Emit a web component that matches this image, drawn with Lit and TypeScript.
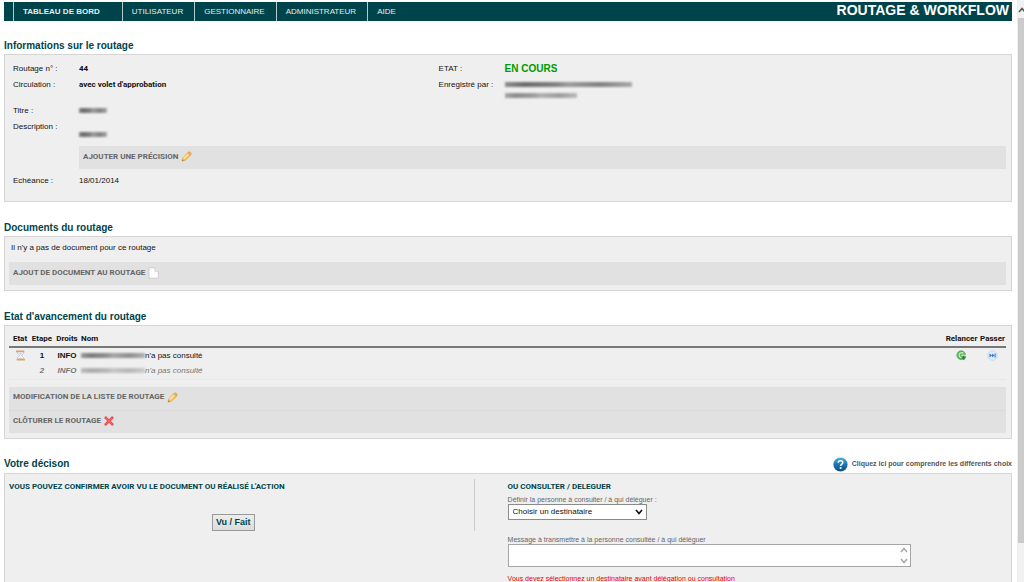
import { LitElement, html, css, svg } from "lit";
import { customElement } from "lit/decorators.js";

const pencil = html`<svg class="icon" width="11" height="11" viewBox="0 0 16 16" aria-hidden="true">
  <path d="M1.5 14.5 L2.6 10.2 L10 2.1 Q12.2 .7 13.9 2.2 Q15.4 3.8 14 6 L6 13.8 Z" fill="#f6c552" stroke="#dca444" stroke-width="1"/>
  <path d="M4 11 L11 4" stroke="#fdeaac" stroke-width="2.2"/>
  <path d="M10.6 2.3 Q12.2 .9 13.8 2.3 Q15.2 3.8 13.8 5.4 L12.9 6.2 L9.8 3.1 Z" fill="#f0ae72" stroke="#d3904c" stroke-width=".6"/>
  <path d="M1.2 14.8 L2 12 L4.2 14.2 Z" fill="#a08252"/>
</svg>`;

const sheet = html`<svg class="icon" width="11" height="12" viewBox="0 0 16 17" aria-hidden="true">
  <path d="M1.5 1 H10 L15 6 V16 H1.5 Z" fill="#fff" stroke="#c0c0c0"/>
  <path d="M10 1 V6 H15" fill="#f0f0f0" stroke="#c3c3c3"/>
</svg>`;

const cross = html`<svg class="icon" width="10" height="10" viewBox="0 0 16 16" aria-hidden="true">
  <path d="M3 3 L13 13 M13 3 L3 13" stroke="#dc4048" stroke-width="4" stroke-linecap="square"/>
  <path d="M3 3 L13 13 M13 3 L3 13" stroke="#f4686c" stroke-width="2.2" stroke-linecap="square"/>
</svg>`;

const hourglass = html`<svg class="glyph" width="11" height="11" viewBox="0 0 16 16" role="img" aria-label="En attente">
  <path d="M3 2.5 H13 L12 5.5 L9 8 L12 10.5 L13 13.5 H3 L4 10.5 L7 8 L4 5.5 Z" fill="#f4f8fe" stroke="#a3bbe4"/>
  <path d="M5.4 4.8 H10.6 L8 7 Z M8 11 L10.6 13 H5.4 Z" fill="#ecc48e"/>
  <path d="M1.5 2 H13.5 M2.5 14 H14.5" stroke="#d6a473" stroke-width="2.4"/>
</svg>`;

const relaunch = html`<svg class="glyph" width="11" height="11" viewBox="0 0 16 16" aria-hidden="true">
  <circle cx="7.6" cy="7.6" r="6.4" fill="#5fb561" stroke="#58a55a"/>
  <path d="M10.8 5 A3.6 3.6 0 1 0 8 11" fill="none" stroke="#d9f2d8" stroke-width="1.5"/>
  <path d="M7.8 7.6 H15" stroke="#eefaee" stroke-width="1.4"/>
  <path d="M12 8.4 V10.4 H14.8 L11.4 15 L8 10.6 H10 V8.4 Z" fill="#36803b"/>
</svg>`;

const skip = html`<svg class="glyph" width="11" height="11" viewBox="0 0 16 16" aria-hidden="true">
  <circle cx="8" cy="8" r="7" fill="#deedfc" stroke="#b4d0ef"/>
  <path d="M3.6 5 L7.4 8 L3.6 11 Z M7.4 5 L11 8 L7.4 11 Z" fill="#3c79c4"/>
  <path d="M11.8 5 V11" stroke="#3c79c4" stroke-width="1.6"/>
</svg>`;

const help = html`<svg class="help-icon" width="15" height="15" viewBox="0 0 30 30" aria-hidden="true">
  <defs><linearGradient id="hg" x1="0" y1="0" x2="0" y2="1">
    <stop offset="0" stop-color="#46b4e0"/><stop offset=".5" stop-color="#1c76b0"/><stop offset="1" stop-color="#124a7e"/>
  </linearGradient></defs>
  <circle cx="15" cy="15" r="14.2" fill="url(#hg)"/>
  <path d="M10.4 11.6 Q10.6 7.4 15 7.4 Q19.6 7.4 19.6 11 Q19.6 13.2 17.2 14.6 Q15.2 15.8 15.2 18" fill="none" stroke="#fff" stroke-width="3"/>
  <circle cx="15.2" cy="22" r="2.1" fill="#fff"/>
</svg>`;

const chevron = (cls: string, d: string) =>
  html`<svg class=${cls} width="8" height="6" viewBox="0 0 8 6" aria-hidden="true">${svg`<path d=${d} fill="none" stroke="currentColor" stroke-width="1.6"/>`}</svg>`;
const UP = "M1 5 L4 1.5 L7 5";
const DOWN = "M1 1 L4 4.5 L7 1";

@customElement("app-root")
export class AppRoot extends LitElement {
  static styles = css`
    :host {
      display: flex;
      height: 100vh;
      overflow: hidden;
      background: #fff;
      color: #111;
      font: 8px/12px "Liberation Sans", Arial, sans-serif;
    }
    * { box-sizing: border-box; }
    a { color: inherit; text-decoration: none; }
    button, select, textarea { font: inherit; color: inherit; margin: 0; border-radius: 0; }
    main { flex: 1; min-width: 0; padding: 2px 5px 0 4px; }
    .bar {
      display: flex;
      height: 19px;
      padding-left: 9px;
      background: #00444b;
      color: #e4eeee;
      line-height: 19px;
    }
    .bar a { padding: 0 11px 0 9px; border-left: 1px solid #b4cccd; }
    .bar .home { padding-right: 22px; font-weight: bold; }
    .brand { margin-left: auto; padding-right: 3px; color: #fff; font-size: 14px; line-height: 17px; font-weight: bold; }
    h2 { margin: 0; color: #00444b; font-size: 10px; line-height: 14px; }
    .head { display: flex; align-items: center; justify-content: space-between; height: 15px; }
    section { margin-top: 17px; }
    section + section { margin-top: 18px; }
    .panel { margin-top: 1px; border: 1px solid #d5d5d5; background: #efefef; }
    dl, dt, dd { margin: 0; }
    .info { padding: 8px 5px 10px 8px; }
    .cols { display: flex; }
    .cols dl:first-child { flex: 3; }
    .cols dl:last-child { flex: 4; }
    .row { display: grid; grid-template-columns: 66px 1fr; min-height: 16px; }
    .texts { margin-top: 7px; }
    .strong, .actions, .steps th, h3 { font-family: Roboto, "Liberation Sans", sans-serif; font-weight: bold; }
    .state { color: #009a00; font-size: 10px; font-weight: bold; }
    .smear {
      display: block;
      height: 5px;
      margin-top: 3px;
      background: linear-gradient(95deg, #777, #4a4a4a 15%, #666 40%, #888 50%, #666 75%, #999);
      filter: blur(1px);
      opacity: .8;
    }
    .smear.name { display: inline-block; width: 64px; height: 5px; margin: 0; vertical-align: 0; opacity: .7; }
    .smear.short { width: 28px; }
    .smear.long { width: 127px; }
    .smear.mid { width: 72px; margin-top: 6px; opacity: .6; }
    .smear.low { margin-top: 11px; }
    .desc { min-height: 25px; }
    .actions { display: flex; flex-direction: column; background: #e1e1e1; }
    .actions a {
      display: flex;
      align-items: center;
      gap: 3px;
      height: 23px;
      padding: 0 4px 2px;
      color: #666;
    }
    .actions a + a { border-top: 1px solid #dadada; }
    .inner { margin-left: 66px; }
    .due { margin-top: 6px; }
    .docs { padding: 5px 5px 5px 4px; }
    .docs p { margin: 0 0 8px 2px; }
    .progress { padding: 5px 5px 5px 4px; }
    .steps { width: 100%; border-collapse: collapse; border-bottom: 1px solid #e6e6e6; }
    .steps th { padding: 2px 0 1px; text-align: center; white-space: nowrap; border-bottom: 2px solid #777; }
    .steps td { height: 16px; padding: 0; text-align: center; font-weight: bold; }
    .steps th.who { text-align: left; }
    .steps td.who { text-align: left; font-weight: normal; }
    .steps .later td { color: #777; font-style: italic; }
    .steps .later .smear { opacity: .4; }
    .c1, .c2 { width: 22px; }
    .c3 { width: 28px; }
    .c5 { width: 35px; }
    .c6 { width: 27px; }
    .glyph { display: block; margin: auto; }
    .steps button { display: block; margin: auto; padding: 0; border: 0; background: none; }
    .steps + .actions { margin-top: 7px; }
    .help { display: flex; align-items: center; gap: 4px; color: #555; font-size: 7px; font-weight: bold; }
    .decision { display: flex; padding: 5px 5px 12px 4px; color: #00444b; }
    h3 { margin: 0; font-size: 8px; line-height: 16px; }
    .confirm {
      flex: none;
      width: 46.7%;
      height: 52px;
      border-right: 1px solid #ccc;
      text-align: center;
    }
    .confirm h3 { text-align: left; }
    .confirm button {
      height: 17px;
      margin: 19px 16px 0 0;
      padding: 0 3px;
      border: 1px solid #999;
      background: linear-gradient(#ededed, #dcdcdc);
      font-size: 9px;
      line-height: 15px;
      font-weight: bold;
    }
    .delegate { flex: 1; padding-left: 33px; }
    .delegate label { display: block; color: #666; font-size: 7px; line-height: 9px; }
    .pick { display: grid; width: 139px; margin-bottom: 15px; color: #111; }
    .pick select {
      grid-area: 1 / 1;
      appearance: none;
      height: 16px;
      padding: 0 4px;
      border: 1px solid #8a8a8a;
      background: #fff;
    }
    .pick-arrow { grid-area: 1 / 1; align-self: center; justify-self: end; margin-right: 4px; pointer-events: none; }
    .message { display: flex; width: 81%; height: 23px; border: 1px solid #a5a5a5; background: #fff; }
    .message textarea { flex: 1; min-width: 0; padding: 2px; border: 0; resize: none; overflow: hidden; background: none; outline: 0; }
    .spin { display: flex; flex-direction: column; justify-content: space-between; width: 11px; padding: 2px 1px; color: #aaa; }
    .warn { margin: 7px 0 0; color: #e60000; font-size: 7px; line-height: 10px; }
    .scroll { display: flex; flex-direction: column; width: 7px; border-left: 1px solid #eee; background: #f1f1f1; }
    .cap { display: flex; height: 18px; padding-top: 7px; color: #555; overflow: hidden; }
    .cap svg { flex: none; }
    .thumb { height: 525px; background: #cbcbcb; }
  `;

  render() {
    return html`
      <main>
        <nav class="bar">
          <a class="home" href="#">TABLEAU DE BORD</a>
          <a href="#">UTILISATEUR</a>
          <a href="#">GESTIONNAIRE</a>
          <a href="#">ADMINISTRATEUR</a>
          <a href="#">AIDE</a>
          <span class="brand">ROUTAGE &amp; WORKFLOW</span>
        </nav>

        <section>
          <div class="head"><h2>Informations sur le routage</h2></div>
          <div class="panel info">
            <div class="cols">
              <dl>
                <div class="row"><dt>Routage n° :</dt><dd class="strong">44</dd></div>
                <div class="row"><dt>Circulation :</dt><dd class="strong">avec volet d'approbation</dd></div>
              </dl>
              <dl>
                <div class="row"><dt>ETAT :</dt><dd class="state">EN COURS</dd></div>
                <div class="row"><dt>Enregistré par :</dt><dd><span class="smear long"></span><span class="smear mid"></span></dd></div>
              </dl>
            </div>
            <dl class="texts">
              <div class="row"><dt>Titre :</dt><dd><span class="smear short"></span></dd></div>
              <div class="row desc"><dt>Description :</dt><dd><span class="smear short low"></span></dd></div>
            </dl>
            <div class="actions inner"><a href="#">AJOUTER UNE PRÉCISION ${pencil}</a></div>
            <dl class="due">
              <div class="row"><dt>Echéance :</dt><dd>18/01/2014</dd></div>
            </dl>
          </div>
        </section>

        <section>
          <div class="head"><h2>Documents du routage</h2></div>
          <div class="panel docs">
            <p>Il n'y a pas de document pour ce routage</p>
            <div class="actions"><a href="#">AJOUT DE DOCUMENT AU ROUTAGE ${sheet}</a></div>
          </div>
        </section>

        <section>
          <div class="head"><h2>Etat d'avancement du routage</h2></div>
          <div class="panel progress">
            <table class="steps">
              <thead>
                <tr>
                  <th class="c1">Etat</th><th class="c2">Etape</th><th class="c3">Droits</th><th class="who">Nom</th>
                  <th class="c5">Relancer</th><th class="c6">Passer</th>
                </tr>
              </thead>
              <tbody>
                <tr>
                  <td>${hourglass}</td><td>1</td><td>INFO</td>
                  <td class="who"><span class="smear name"></span>n'a pas consulté</td>
                  <td><button aria-label="Relancer">${relaunch}</button></td>
                  <td><button aria-label="Passer">${skip}</button></td>
                </tr>
                <tr class="later">
                  <td></td><td>2</td><td>INFO</td>
                  <td class="who"><span class="smear name"></span>n'a pas consulté</td>
                  <td></td><td></td>
                </tr>
              </tbody>
            </table>
            <div class="actions">
              <a href="#">MODIFICATION DE LA LISTE DE ROUTAGE ${pencil}</a>
              <a href="#">CLÔTURER LE ROUTAGE ${cross}</a>
            </div>
          </div>
        </section>

        <section>
          <div class="head">
            <h2>Votre décison</h2>
            <a class="help" href="#">${help} Cliquez ici pour comprendre les différents choix</a>
          </div>
          <div class="panel decision">
            <div class="confirm">
              <h3>VOUS POUVEZ CONFIRMER AVOIR VU LE DOCUMENT OU RÉALISÉ L'ACTION</h3>
              <button>Vu / Fait</button>
            </div>
            <div class="delegate">
              <h3>OU CONSULTER / DELEGUER</h3>
              <label for="who">Définir la personne à consulter / à qui déléguer :</label>
              <div class="pick">
                <select id="who"><option>Choisir un destinataire</option></select>
                ${chevron("pick-arrow", DOWN)}
              </div>
              <label for="msg">Message à transmettre à la personne consultée / à qui déléguer</label>
              <div class="message">
                <textarea id="msg"></textarea>
                <span class="spin">${chevron("", UP)}${chevron("", DOWN)}</span>
              </div>
              <p class="warn">Vous devez sélectionnez un destinataire avant délégation ou consultation</p>
            </div>
          </div>
        </section>
      </main>
      <div class="scroll"><span class="cap">${chevron("", UP)}</span><span class="thumb"></span></div>
    `;
  }
}
